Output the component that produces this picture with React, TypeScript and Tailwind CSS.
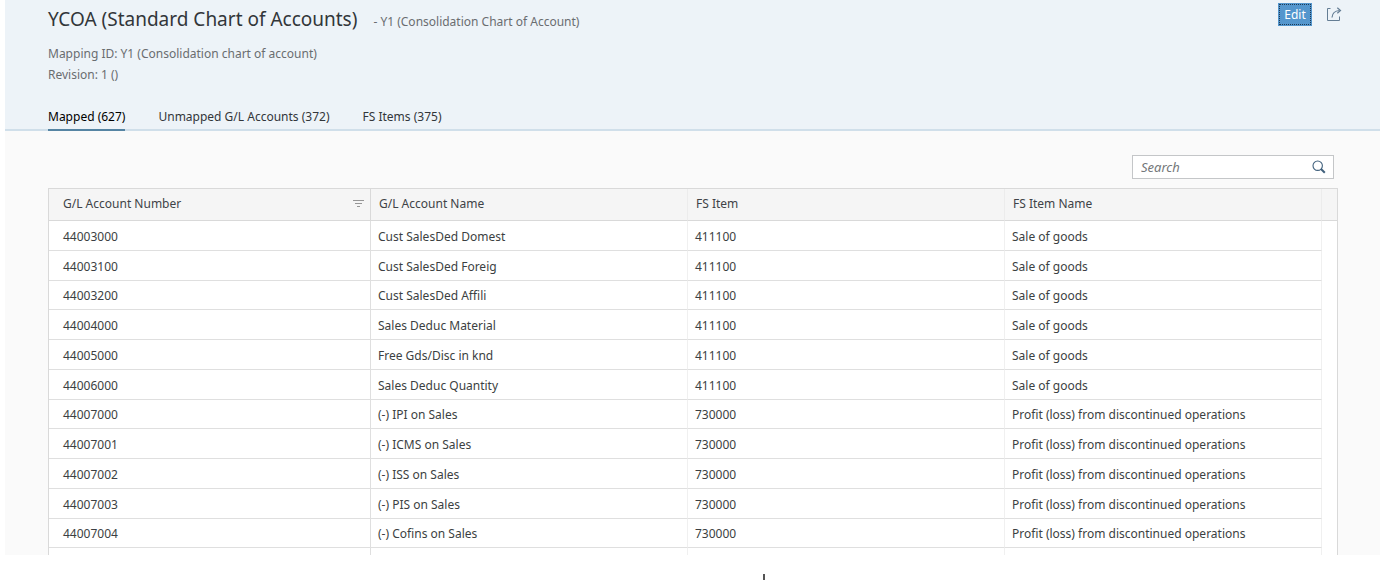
const rows: string[][] = [
  ["44003000", "Cust SalesDed Domest", "411100", "Sale of goods"],
  ["44003100", "Cust SalesDed Foreig", "411100", "Sale of goods"],
  ["44003200", "Cust SalesDed Affili", "411100", "Sale of goods"],
  ["44004000", "Sales Deduc Material", "411100", "Sale of goods"],
  ["44005000", "Free Gds/Disc in knd", "411100", "Sale of goods"],
  ["44006000", "Sales Deduc Quantity", "411100", "Sale of goods"],
  ["44007000", "(-) IPI on Sales", "730000", "Profit (loss) from discontinued operations"],
  ["44007001", "(-) ICMS on Sales", "730000", "Profit (loss) from discontinued operations"],
  ["44007002", "(-) ISS on Sales", "730000", "Profit (loss) from discontinued operations"],
  ["44007003", "(-) PIS on Sales", "730000", "Profit (loss) from discontinued operations"],
  ["44007004", "(-) Cofins on Sales", "730000", "Profit (loss) from discontinued operations"],
];

function ShareIcon() {
  return (
    <svg width="16" height="16" viewBox="0 0 16 16" fill="none" stroke="#647d94" aria-hidden="true">
      <path d="M4.500 1.500h-3v12h12v-4" />
      <path d="M6 10.500c.3-4.300 2.800-6.700 7.500-7" strokeWidth="1.200" />
      <path d="M11.300 .8l3.200 2.700-3.200 2.700" strokeWidth="1.200" />
    </svg>
  );
}

function SearchIcon() {
  return (
    <svg width="14" height="14" viewBox="0 0 14 14" fill="none" stroke="#41617d" aria-hidden="true">
      <circle cx="5.700" cy="5.700" r="4.700" strokeWidth="1.100" />
      <path d="M9 9l3.800 3.800" strokeWidth="2" />
    </svg>
  );
}

function FilterIcon() {
  return (
    <svg width="11" height="8" viewBox="0 0 11 8" stroke="#969696" aria-hidden="true">
      <path d="M0 .5h11M2 3.500h7M4 6.500h3" />
    </svg>
  );
}

const headCell = "border-b border-[#d9d9d9] pb-0.5 text-left font-normal text-[#404347]";
const bodyCell = "border-b border-r border-[#dfdfdf] pt-0.5";

export default function App() {
  return (
    <div className="overflow-hidden bg-white font-['Noto_Sans','Open_Sans',sans-serif] text-[12px] leading-4 text-[#3c3f42]">
      <div className="ml-[5px] bg-[#fafafa]">
        <header className="border-b-2 border-[#d0dfea] bg-[#edf3f8] pl-[43px] pr-[38px]">
          <div className="flex items-start justify-between pt-[3px]">
            <div className="flex items-baseline gap-4 pt-1">
              <h1 className="text-[19px] leading-6 text-[#32363a]">YCOA (Standard Chart of Accounts)</h1>
              <span className="text-[#6a6d70]">- Y1 (Consolidation Chart of Account)</span>
            </div>
            <div className="flex items-center gap-3.5">
              <button type="button" className="h-[23px] w-[34px] bg-[#5496cd] p-px text-white">
                <span className="flex h-full items-center justify-center border border-dotted border-[#1d3a56]">Edit</span>
              </button>
              <button type="button" aria-label="Share">
                <ShareIcon />
              </button>
            </div>
          </div>
          <div className="pt-[15px] text-[#6a6d70]">
            <p>Mapping ID: Y1 (Consolidation chart of account)</p>
            <p className="pt-[5px]">Revision: 1 ()</p>
          </div>
          <nav className="-mb-0.5 flex gap-[33px] pt-[26px] text-[#32363a]">
            <a href="#mapped" aria-current="page" className="border-b-2 border-[#5584a3] pb-1 text-black">Mapped (627)</a>
            <a href="#unmapped" className="pb-1.5">Unmapped G/L Accounts (372)</a>
            <a href="#items">FS Items (375)</a>
          </nav>
        </header>
        <main className="pl-[43px] pr-[42px] pt-6">
          <div className="flex justify-end pb-[9px] pr-1">
            <label className="flex h-6 w-[202px] items-center border border-[#c4c6c8] bg-white pl-2 pr-[7px]">
              <input type="search" placeholder="Search" aria-label="Search" className="min-w-0 flex-1 bg-transparent text-[13px] outline-none placeholder:italic placeholder:text-[#74777a]" />
              <SearchIcon />
            </label>
          </div>
          <table className="w-full table-fixed border-separate border-spacing-0 border-x border-t border-[#d9d9d9] bg-white">
            <colgroup>
              <col className="w-[322px]" />
              <col />
              <col />
              <col />
              <col className="w-[15px]" />
            </colgroup>
            <thead>
              <tr className="h-8 bg-[#f5f5f5]">
                <th className={`${headCell} border-r pl-3.5 pr-1.5`}>
                  <div className="flex items-center justify-between">
                    G/L Account Number
                    <FilterIcon />
                  </div>
                </th>
                <th className={`${headCell} border-r border-r-[#ececec] pl-2`}>G/L Account Name</th>
                <th className={`${headCell} border-r border-r-[#ececec] pl-2`}>FS Item</th>
                <th className={`${headCell} border-r border-r-[#ececec] pl-2`}>FS Item Name</th>
                <th className={headCell} />
              </tr>
            </thead>
            <tbody>
              {rows.map((row) => (
                <tr key={row[0]} className="h-[30px] [&:nth-child(4n+3)]:h-[29px]">
                  <td className={`${bodyCell} pl-3.5`}>{row[0]}</td>
                  <td className={`${bodyCell} border-r-[#f0f0f0] pl-[7px]`}>{row[1]}</td>
                  <td className={`${bodyCell} border-r-[#f0f0f0] pl-[7px]`}>{row[2]}</td>
                  <td className={`${bodyCell} border-r-[#f0f0f0] pl-[7px]`}>{row[3]}</td>
                  <td />
                </tr>
              ))}
              <tr className="h-[7px]" aria-hidden="true">
                <td className="border-r border-[#dfdfdf]" />
                <td className="border-r border-[#f0f0f0]" />
                <td className="border-r border-[#f0f0f0]" />
                <td className="border-r border-[#f0f0f0]" />
                <td />
              </tr>
            </tbody>
          </table>
        </main>
      </div>
      <div className="flex justify-center pl-[148px] pt-[19px]">
        <div className="h-1.5 w-0.5 bg-[#555]" />
      </div>
    </div>
  );
}
